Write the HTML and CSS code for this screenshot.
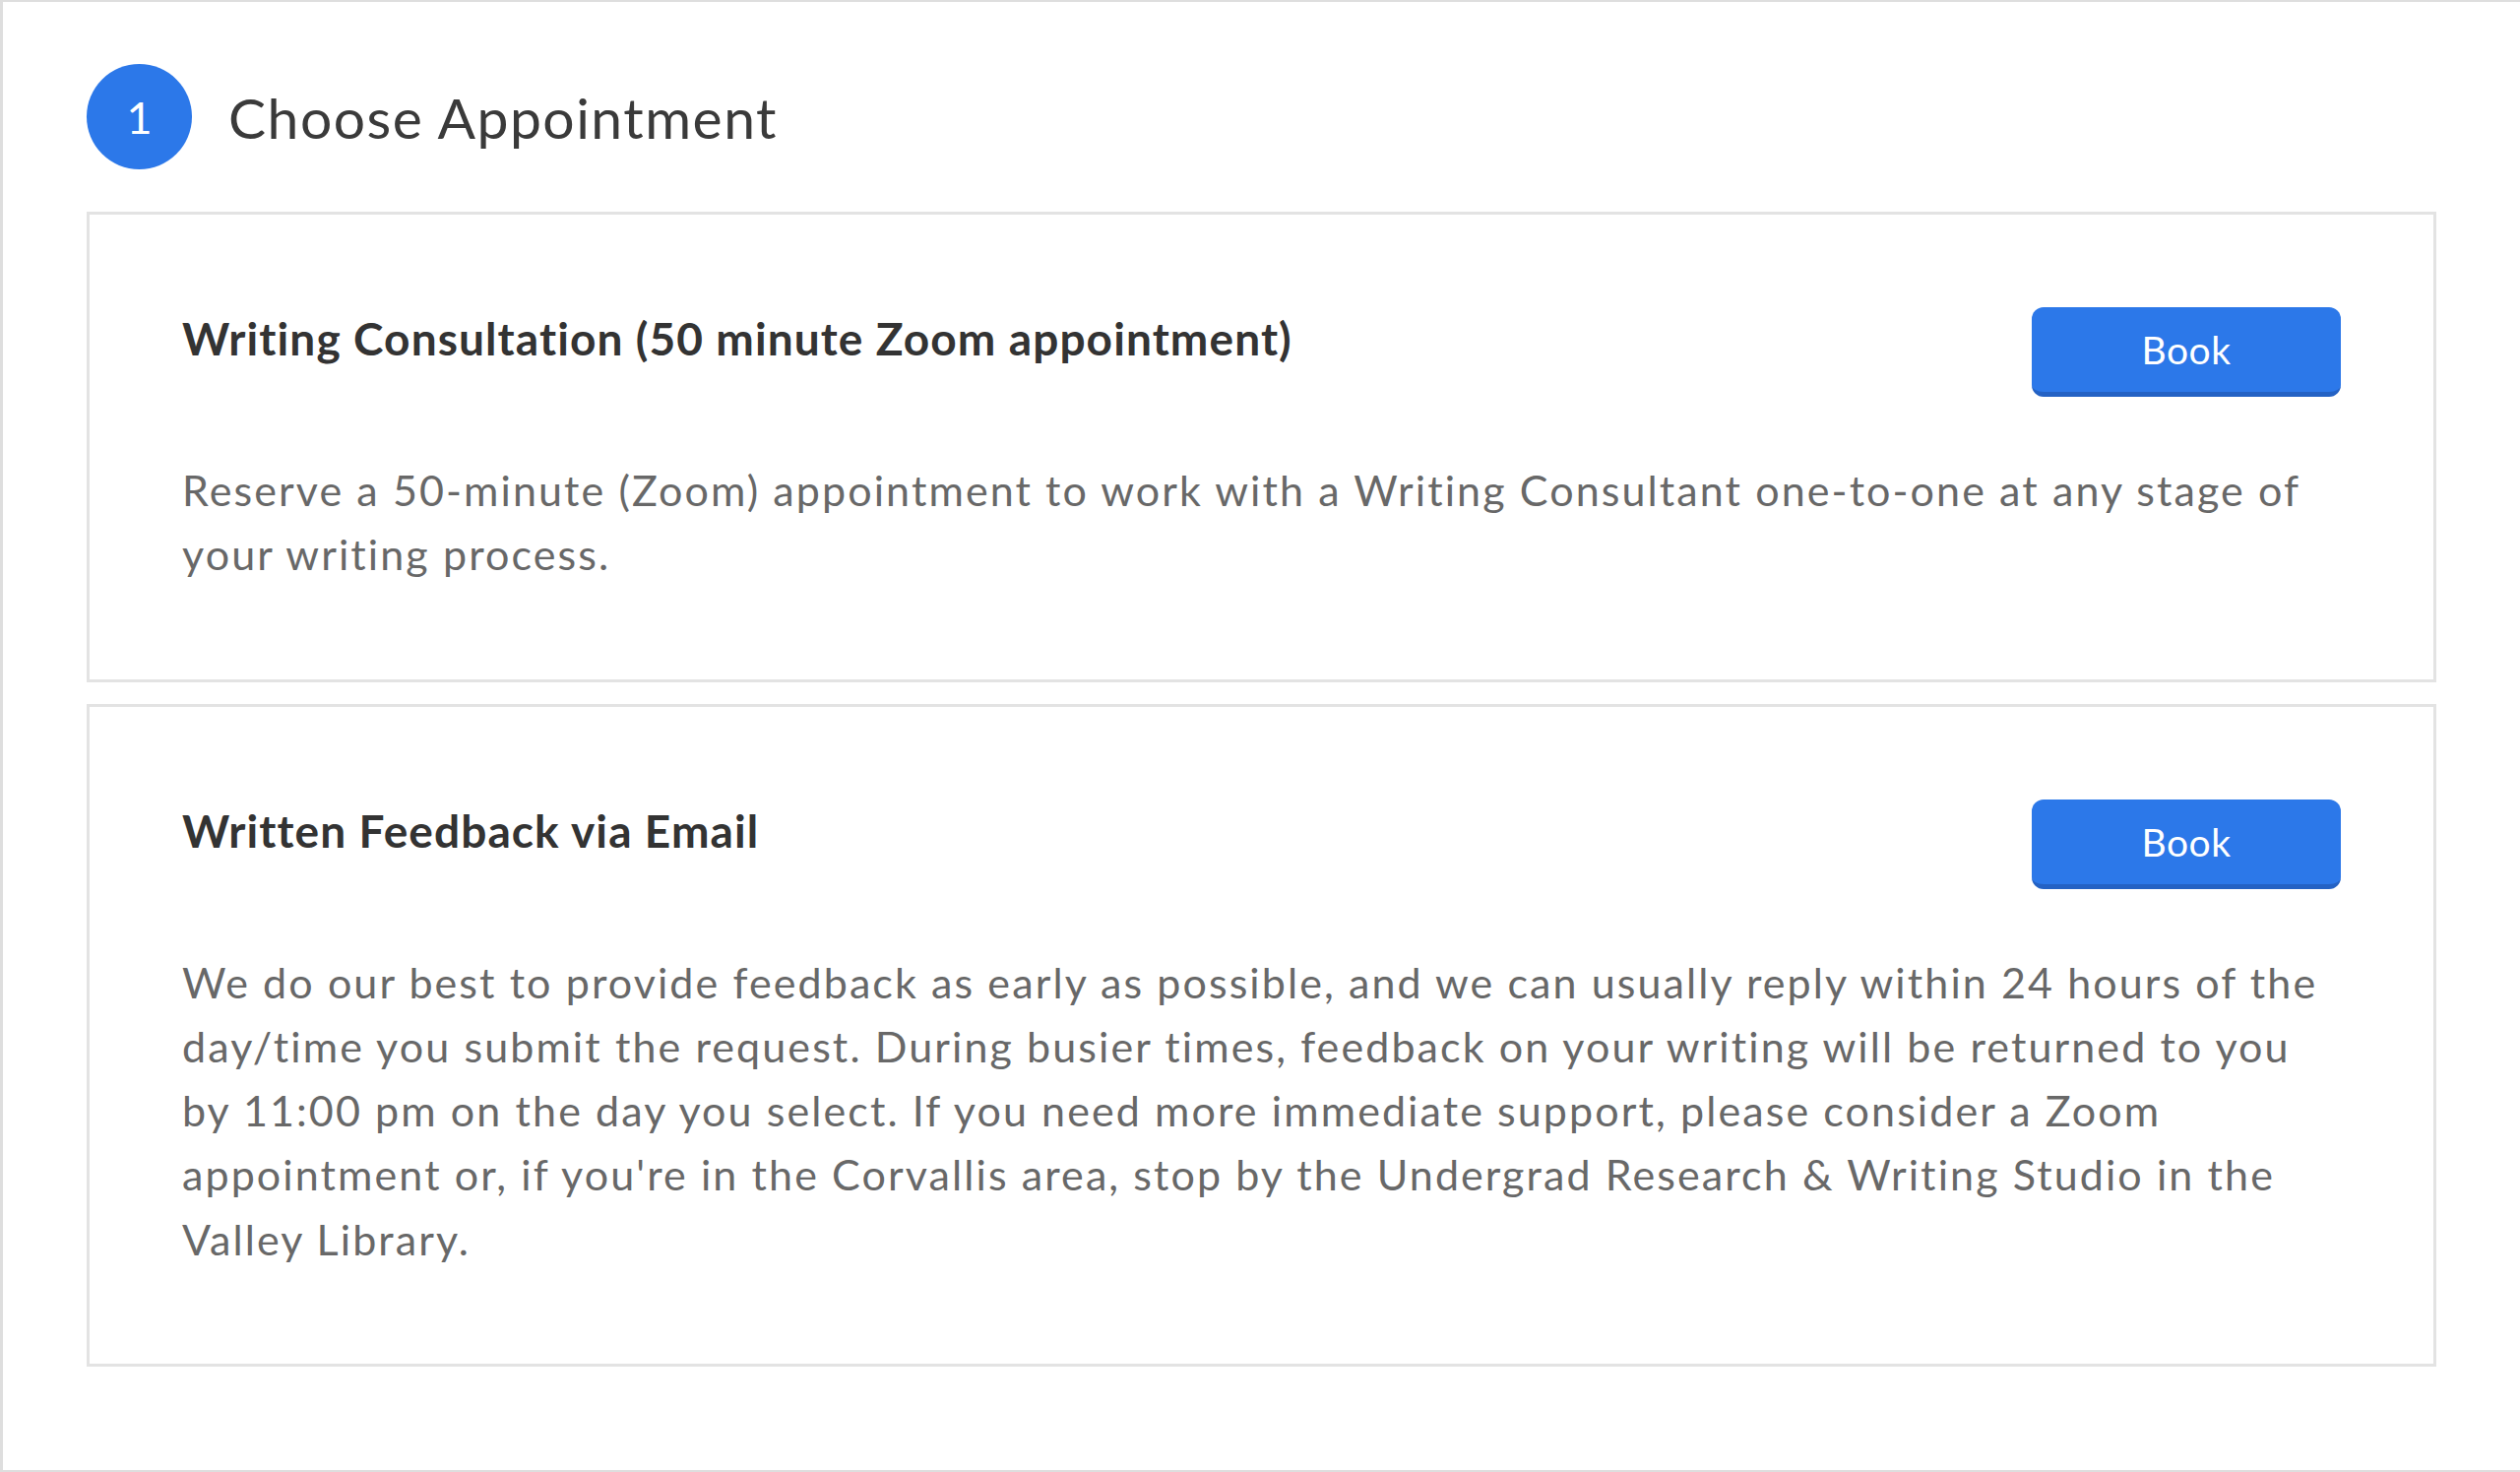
FILE: index.html
```html
<!DOCTYPE html>
<html lang="en">

<head>
    <meta charset="UTF-8">
    <meta name="viewport" content="width=device-width, initial-scale=1.0">
    <title>Choose Appointment</title>
    <link rel="stylesheet" href="styles.css">
</head>

<body>
    <div class="page">
        <div class="step-head">
            <span class="step-num">1</span>
            <h2 class="step-title">Choose Appointment</h2>
        </div>

        <div class="appt">
            <div class="appt-top">
                <h3 class="appt-name">Writing Consultation (50 minute Zoom appointment)</h3>
                <button class="btn-book">Book</button>
            </div>
            <p class="appt-desc">Reserve a 50-minute (Zoom) appointment to work with a Writing Consultant one-to-one at any stage of your writing process.</p>
        </div>

        <div class="appt">
            <div class="appt-top">
                <h3 class="appt-name">Written Feedback via Email</h3>
                <button class="btn-book">Book</button>
            </div>
            <p class="appt-desc">We do our best to provide feedback as early as possible, and we can usually reply within 24 hours of the day/time you submit the request. During busier times, feedback on your writing will be returned to you by 11:00 pm on the day you select. If you need more immediate support, please consider a Zoom appointment or, if you're in the Corvallis area, stop by the Undergrad Research &amp; Writing Studio in the Valley Library.</p>
        </div>
    </div>
</body>

</html>
```

FILE: styles.css
```css
* {
    padding: 0;
    margin: 0;
    box-sizing: border-box;
}

body {
    background-color: #fff;
    font-family: Lato, "Open Sans", sans-serif;
}

.page {
    height: 100vh;
    border-left: 3px solid #dedede;
    border-top: 2px solid #dedede;
    border-bottom: 2px solid #dedede;
    padding: 63px 85px 0 85px;
}

.step-head {
    display: flex;
    align-items: center;
    gap: 37px;
    margin-bottom: 43px;
}

.step-num {
    width: 107px;
    height: 107px;
    border-radius: 50%;
    background-color: #2c78e9;
    color: #fff;
    font-size: 45px;
    display: flex;
    align-items: center;
    justify-content: center;
}

.step-title {
    font-size: 57px;
    font-weight: 400;
    letter-spacing: 1.5px;
    color: #3a3a3a;
}

.appt {
    border: 3px solid #e3e3e3;
    padding: 94px;
    margin-bottom: 22px;
}

.appt-top {
    display: flex;
    justify-content: space-between;
    align-items: flex-start;
}

.appt-name {
    font-size: 46px;
    font-weight: 700;
    letter-spacing: 1.1px;
    color: #333;
    line-height: 1;
    margin-top: 9px;
}

.btn-book {
    width: 314px;
    height: 91px;
    border: none;
    border-bottom: 5px solid #2462c4;
    border-radius: 12px;
    background-color: #2c78e9;
    color: #fff;
    font-family: inherit;
    font-size: 39px;
    letter-spacing: 0.5px;
    cursor: pointer;
}

.appt-desc {
    margin-top: 62px;
    font-size: 43px;
    line-height: 65.3px;
    letter-spacing: 2.1px;
    color: #686868;
}
```
